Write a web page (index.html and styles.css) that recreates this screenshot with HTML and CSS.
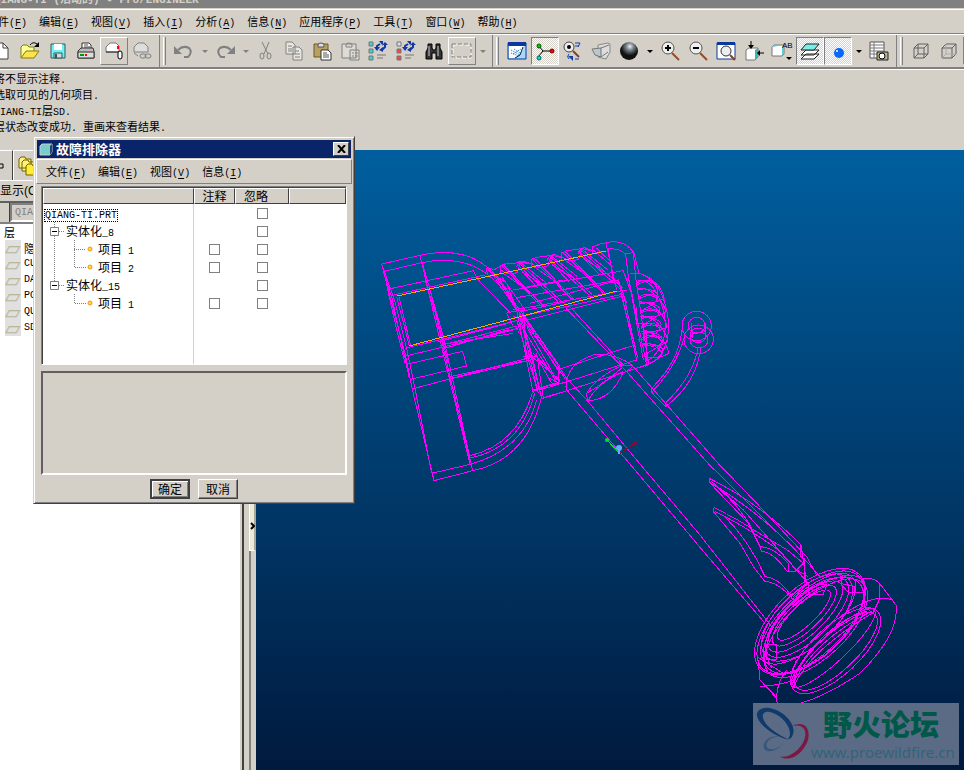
FILE: index.html
```html
<!DOCTYPE html>
<html lang="zh-CN">
<head>
<meta charset="utf-8">
<title>Pro/ENGINEER</title>
<link rel="stylesheet" href="styles.css">
</head>
<body>
<header class="titlebar">QIANG-TI (活动的) - Pro/ENGINEER</header>
<nav class="menubar main-menu">
<button>文件<span class="en">(<u>F</u>)</span></button><button>编辑<span class="en">(<u>E</u>)</span></button><button>视图<span class="en">(<u>V</u>)</span></button><button>插入<span class="en">(<u>I</u>)</span></button><button>分析<span class="en">(<u>A</u>)</span></button><button>信息<span class="en">(<u>N</u>)</span></button><button>应用程序<span class="en">(<u>P</u>)</span></button><button>工具<span class="en">(<u>T</u>)</span></button><button>窗口<span class="en">(<u>W</u>)</span></button><button>帮助<span class="en">(<u>H</u>)</span></button>
</nav>
<div class="toolbar">
<div class="group first">
<button class="tool" aria-label="新建"><svg viewBox="0 0 20 20"><path d="M3 2h8l5 5v11H3z" fill="#fff" stroke="#404040"/><path d="M11 2v5h5" fill="none" stroke="#404040"/></svg></button>
<button class="tool" aria-label="打开"><svg viewBox="0 0 20 20"><path d="M1 17V6l2-2h4l2 2h5v4" fill="#ffff9c" stroke="#808000"/><path d="M1 17l5-7h13l-5 7z" fill="#ffe34a" stroke="#808000"/><path d="M10 4q3-4 7-1" fill="none" stroke="#000"/><path d="M19 1v5h-5z"/></svg></button>
<button class="tool" aria-label="保存"><svg viewBox="0 0 20 20"><path d="M3 3h14v14H3z" fill="#6ff0f4" stroke="#305860"/><path d="M6 3h8v6H6z" fill="#fff"/><path d="M6 12h8v5H6z" fill="#d8d8d8" stroke="#305860"/><path d="M7 13h2v4H7z" fill="#305860"/></svg></button>
<button class="tool" aria-label="打印"><svg viewBox="0 0 20 20"><path d="M6 8V2h7l2 2v5z" fill="#fff" stroke="#333"/><path d="M8 4h4M8 6h6" stroke="#555"/><path d="M2 10l3-3h12l1 3v7H2z" fill="#bcbcbc" stroke="#333"/><path d="M2 11h16v6H2z" fill="#ddd" stroke="#333"/><path d="M4 14h4" stroke="#009900" stroke-width="2"/><path d="M9 14h2" stroke="red" stroke-width="2"/></svg></button>
<button class="tool raised" aria-label="发送邮件"><svg viewBox="0 0 20 20"><path d="M2 11V6l4-4h6l3 3v6z" fill="#fff" stroke="#777"/><path d="M2 11h12" stroke="#222"/><path d="M13 5h2v3h-2z" fill="red"/><rect x="14" y="10" width="4" height="8" rx="2" fill="#fff" stroke="#000" stroke-width="1"/></svg></button>
<button class="tool" aria-label="发送链接"><svg viewBox="0 0 20 20" fill="none" stroke="#808080"><path d="M2 11V6l4-4h6l4 4v5z" fill="#ddd"/><path d="M2 12l4 3"/><rect x="8" y="13" width="6" height="4" rx="2"/><rect x="13" y="13" width="6" height="4" rx="2"/></svg></button>
</div>
<div class="group">
<button class="tool" aria-label="撤消"><svg viewBox="0 0 20 20"><path d="M4 9q5-5 11-2 4 4-1 9h-4" fill="none" stroke="#808080" stroke-width="2"/><path d="M0 5v8h8z" fill="#808080"/></svg></button><button class="arrow dim" aria-label="撤消列表"></button>
<button class="tool" aria-label="重做"><svg viewBox="0 0 20 20"><path d="M16 9Q11 4 5 7q-4 4 1 9h4" fill="none" stroke="#808080" stroke-width="2"/><path d="M20 5v8h-8z" fill="#808080"/></svg></button><button class="arrow dim" aria-label="重做列表"></button>
<button class="tool" aria-label="剪切"><svg viewBox="0 0 20 20" fill="none" stroke="#808080"><path d="M6 1l6 12M13 1L8 13"/><ellipse cx="6" cy="15" rx="2" ry="3"/><ellipse cx="13" cy="15" rx="2" ry="3"/></svg></button>
<button class="tool" aria-label="复制"><svg viewBox="0 0 20 20" fill="#e8e6e0" stroke="#808080"><path d="M2 1h6l3 3v9H2zM9 6h6l3 3v10H9z"/><path d="M4 5h4M4 8h4M4 10h4M11 10h4M11 13h5M11 16h5"/></svg></button>
<button class="tool" aria-label="粘贴"><svg viewBox="0 0 20 20"><path d="M2 3h14v13H2z" fill="#b8a060" stroke="#705820"/><path d="M6 4q0-2 3-2t3 2v2H6z" fill="#ddd" stroke="#555"/><path d="M9 9h7l3 3v7H9z" fill="#fff" stroke="#333"/><path d="M11 12h4M11 14h6M11 16h6" stroke="#555"/></svg></button>
<button class="tool" aria-label="选择性粘贴"><svg viewBox="0 0 20 20" fill="#dedbd4" stroke="#808080"><path d="M2 3h14v14H2zM6 4q0-2 3-2t3 2v2H6zM10 9h9v10h-9z"/><path d="M12 12h2M15 12h3M12 15h2M15 15h3"/></svg></button>
<button class="tool" aria-label="再生"><svg viewBox="0 0 20 20"><path d="M1 1h4v4H1zM1 8h4v4H1zM1 15h4v4H1z" fill="#40d0d0" stroke="#777"/><path d="M9 8V5l3-2M17 3v3l-3 3" fill="none" stroke="#1038a8" stroke-width="2"/><path d="M11 0h4v5zM6 6h6L9 10zM14 4h6L17 1zM15 6v5l-4-2z" fill="#1038a8"/><path d="M9 14h9M9 17h6" stroke="#777"/></svg></button>
<button class="tool" aria-label="再生管理器"><svg viewBox="0 0 20 20"><path d="M1 1h4v4H1z" fill="#ddd" stroke="#777"/><path d="M1 8h4v4H1zM1 15h4v4H1z" fill="#f04848" stroke="#777"/><path d="M9 8V5l3-2M17 3v3l-3 3" fill="none" stroke="#1038a8" stroke-width="2"/><path d="M11 0h4v5zM6 6h6L9 10zM14 4h6L17 1zM15 6v5l-4-2z" fill="#1038a8"/><path d="M9 14h9M9 17h6" stroke="#777"/></svg></button>
<button class="tool" aria-label="查找"><svg viewBox="0 0 20 20"><path d="M4 3h4v4l1 2h2l1-2V3h4v4l2 4v7h-6v-6H8v6H2v-7l2-4z" fill="#333" stroke="#000"/><path d="M5 5v10M14 5v10" stroke="#ccc"/></svg></button>
<button class="tool raised" aria-label="选取框"><svg viewBox="0 0 20 20"><path d="M1 4h18v13H1z" fill="none" stroke="#fff" stroke-dasharray="4 2"/><path d="M0 3h19v13H0z" fill="none" stroke="#808080" stroke-dasharray="4 2"/></svg></button><button class="arrow dim" aria-label="选取列表"></button>
</div>
<div class="group">
<button class="tool" aria-label="重画"><svg viewBox="0 0 20 20"><path d="M1 2h18v16H1z" fill="#a4d8fc" stroke="#0838a0"/><path d="M1 1h18v4H1z" fill="#0838a0"/><path d="M2 5h15q-3 9-10 12H2z" fill="#fff"/><path d="M4 9l9 5M6 13l8-5M4 12l8 3M7 8l6 4" fill="none" stroke="#0070d0" stroke-dasharray="1 1"/><path d="M8 17l5-3 3-8" fill="none" stroke="#123"/></svg></button>
<button class="tool pressed" aria-label="旋转中心"><svg viewBox="0 0 20 20"><path d="M3 4l5 6h9M8 10l-5 6" fill="none" stroke="#000"/><circle cx="4" cy="5" r="2" fill="#0c0" stroke="#050"/><circle cx="17" cy="10" r="2" fill="#f00" stroke="#700"/><circle cx="4" cy="17" r="2" fill="#0dd" stroke="#066"/></svg></button>
<button class="tool" aria-label="定向模式"><svg viewBox="0 0 20 20"><circle cx="6" cy="6" r="5" fill="#eee" stroke="#444"/><circle cx="6" cy="6" r="2"/><path d="M10 10l6 6" stroke="#844020" stroke-width="2"/><path d="M12 2h5M12 5h4M17 2l-2 4M6 18q-3-2 0-5M12 18h4" fill="none" stroke="#1040a8"/><path d="M5 15h5v5z" fill="#1040a8"/></svg></button>
<button class="tool" aria-label="视图管理器"><svg viewBox="0 0 20 20"><path d="M7 4l10-2 2 1v8l-4 7-8-2z" fill="#ddd" stroke="#888"/><path d="M1 8l9-1v9l-6-2zM10 7l8-3M10 16l7-5" fill="#b8c8cc" stroke="#777"/></svg></button>
<button class="tool" aria-label="着色"><svg viewBox="0 0 20 20"><defs><radialGradient id="ball" cx=".55" cy=".25"><stop stop-color="#eee"/><stop offset=".4" stop-color="#7c8790"/><stop offset="1" stop-color="#111"/></radialGradient></defs><circle cx="10" cy="10" r="9" fill="url(#ball)"/></svg></button><button class="arrow" aria-label="着色列表"></button>
<button class="tool" aria-label="放大"><svg viewBox="0 0 20 20"><circle cx="8" cy="7" r="6" fill="#eee" stroke="#555"/><path d="M5 7h6M8 4v6" stroke="#000" stroke-width="2"/><path d="M12 12l7 7" stroke="#944c28" stroke-width="2"/></svg></button>
<button class="tool" aria-label="缩小"><svg viewBox="0 0 20 20"><circle cx="8" cy="7" r="6" fill="#eee" stroke="#555"/><path d="M5 7h6" stroke="#000" stroke-width="2"/><path d="M12 12l7 7" stroke="#944c28" stroke-width="2"/></svg></button>
<button class="tool" aria-label="重新调整"><svg viewBox="0 0 20 20"><path d="M1 2h18v16H1z" fill="#fff" stroke="#0838a0"/><path d="M1 1h18v3H1z" fill="#0838a0"/><circle cx="10" cy="10" r="5" fill="#eee" stroke="#333"/><path d="M14 14l5 5" stroke="#844020" stroke-width="2"/></svg></button>
<button class="tool" aria-label="重定向"><svg viewBox="0 0 20 20"><path d="M2 9l3-2h9v9l-3 3H2z" fill="#fff" stroke="#777"/><path d="M11 9l3-2v9l-3 3z" fill="#39b8b8"/><path d="M7 0v6M14 12h6" stroke="#000"/><path d="M4 4h6L7 8zM16 9v6l-3-3z"/></svg></button>
<button class="tool" aria-label="已命名视图"><svg viewBox="0 0 20 20"><path d="M0 6l2-2h10v9l-2 2H0z" fill="#fff" stroke="#777"/><path d="M0 6l2-2h10l-2 2v8l2-1V4z" fill="#5cd"/><path d="M14 16h6l-3 3z"/><text x="10" y="7">AB</text></svg></button>
<button class="tool pressed" aria-label="层"><svg viewBox="0 0 20 20"><path d="M1 18l5-5h13l-5 5zM1 14l5-5h13l-5 5z" fill="#fff" stroke="#222"/><path d="M1 9l5-6h13l-5 6z" fill="#78f0e8" stroke="#222"/></svg></button>
<button class="tool pressed" aria-label="增强的真实感"><svg viewBox="0 0 20 20"><circle cx="11" cy="12" r="5" fill="#0868f8"/><circle cx="9" cy="10" r="1" fill="#fff"/></svg></button><button class="arrow" aria-label="真实感列表"></button>
<button class="tool" aria-label="捕捉"><svg viewBox="0 0 20 20"><path d="M1 1h14v16H1z" fill="#fff" stroke="#555"/><path d="M1 4h14M1 7h14M1 10h14M1 13h14M5 1v16" stroke="#777"/><path d="M8 11h11v8H8z" fill="#b8b48c" stroke="#222"/><circle cx="13" cy="15" r="3" fill="#fff" stroke="#000"/></svg></button>
</div>
<div class="group">
<button class="tool" aria-label="线框"><svg viewBox="0 0 20 20" fill="none" stroke="#606060"><path d="M3 7h10v10H3zM7 3h10v10H7zM3 7l4-4M13 7l4-4M13 17l4-4M3 17l4-4"/></svg></button>
<button class="tool" aria-label="隐藏线"><svg viewBox="0 0 20 20" fill="none" stroke="#606060"><path d="M3 7h10v10H3zM3 7l4-4h10v10l-4 4M13 7l4-4"/><path d="M7 3v10h10M3 17l4-4" stroke="#aaa"/></svg></button>
<button class="tool pressed" aria-label="无隐藏线"></button>
</div>
</div>
<section class="messages">
<p>将不显示注释<span class="en">.</span></p><p>选取可见的几何项目<span class="en">.</span></p><p><span class="en">QIANG-TI</span>层<span class="en">SD.</span></p><p>层状态改变成功<span class="en">. </span>重画来查看结果<span class="en">.</span></p>
</section>
<main>
<aside>
<div class="tabs"><button class="tab" aria-label="模型树"><svg width="8" height="8"><path d="M0 2h3v4H0" fill="none" stroke="#000"/></svg></button><button class="tab" aria-label="层树"><svg width="20" height="20" viewBox="0 0 20 20"><path d="M1 12V3l2-2h4l1 2h5v9zM4 15V6l2-2h4l1 2h5v9z" fill="#fff37a" stroke="#706000"/><path d="M8 19v-9l2-2h4l1 2h5v9z" fill="#ffee38" stroke="#706000"/></svg></button></div>
<div class="show">显示(O)</div>
<div class="filter"><button aria-label="过滤"></button><select disabled aria-label="模型"><option>QIANG-TI.PRT</option></select></div>
<div class="layers">
<div class="layer-head">层</div>
<ul><li>隐</li><li><span class="en">CU</span></li><li><span class="en">DA</span></li><li><span class="en">PO</span></li><li><span class="en">QU</span></li><li><span class="en">SD</span></li></ul>
</div>
</aside>
<div class="splitter"><button aria-label="折叠"><svg width="5" height="8"><path d="M1 1l3 3-3 3" fill="none" stroke="#000" stroke-width="2"/></svg></button></div>
<section class="canvas">
<svg class="model" viewBox="256 150 708 620" preserveAspectRatio="xMinYMin meet">
<defs>
<g id="rib"><path d="M62 132V108Q80 98 105 100L118 95 150 102M64 120Q85 140 112 127L122 95M66 108L185 230M72 106L190 228M76 108L150 190M70 130L120 165M110 112Q112 96 130 93L158 104M112 104L235 215M118 100L245 214M122 98L200 160M118 115L175 175M125 125L190 165"/></g>
<path id="coil" d="M470 160Q500 140 530 160 550 185 552 205 520 225 480 215M474 180Q505 170 532 190 540 205 520 222L480 245M472 175Q510 172 534 205M471 165Q505 145 528 164"/>
</defs>
<g class="wire">
<g transform="translate(370 230) scale(.33333)">
<path d="M35 102L150 76Q240 55 310 85 360 110 390 150L440 240M40 125L155 98Q240 80 310 108 360 130 400 180L450 250M35 102L60 200 105 370 125 470 192 752M38 110L75 215 110 355 135 475 185 730M40 125L65 200 118 445M48 145L52 175 78 290 105 400M150 76L210 330 300 703M157 98L220 320 308 722M165 150L195 245 240 440 300 690M180 180L235 400M185 730L300 703Q460 660 500 510M192 752L308 722Q470 690 515 500M300 677Q440 645 487 490M300 684Q450 655 494 490"/>
<path d="M57 177L310 122 325 150 420 248M62 197L345 135M80 200L118 348M87 200L122 348M105 355L440 272M108 378L430 300M110 403L278 364 290 408 122 448M130 476L490 380M240 440L460 393M245 446L490 388M210 347L440 288M215 352L440 296M218 343L430 310M222 356L410 300M205 335L415 280M410 248L460 240M410 250L430 290"/>
<path d="M440 240L490 490M448 250L502 480M455 265L515 505M440 270L505 490M450 250L487 380 515 505M460 240L470 390M445 310L460 260M440 300L470 255M430 260L465 270M460 380L500 378M485 485L518 475M390 150L425 200 440 240M395 140L465 240M450 240L570 410M458 255L570 430M470 290L560 450M490 370L570 455M500 380L545 460M490 480L570 455M515 505L570 488"/>
</g>
<g transform="translate(480 230) scale(.33333)">
<use href="#rib"/><use href="#rib" x="92" y="-20"/><use href="#rib" x="184" y="-40"/>
<path d="M22 135L20 115 45 118 75 100M22 115Q40 142 62 130M28 118L110 240M32 118L118 238M38 130L80 160 110 235M338 68V48M340 60L400 112M350 55L395 98"/>
<path d="M340 50Q360 40 380 38 430 25 462 68L478 132M380 55Q420 55 437 72L460 68M378 40L410 180M384 55L400 150M437 72L445 140 500 405M460 70L468 150 505 400M445 140L470 280 490 390M100 180L430 122 450 180M110 203L415 150 440 220M100 240L440 180M120 260L430 192M120 275L430 198M150 220L400 155M120 175L250 150M120 245L260 215"/>
<path d="M415 150L470 390M422 190L465 350M430 190L473 385M230 420L465 345M190 505L500 405M180 480L470 390M160 480L235 460M450 130Q490 125 510 150 540 170 530 200M465 130Q535 130 560 240 575 310 550 360 535 395 495 405M475 150Q525 150 550 240 565 310 540 350 525 385 495 395"/>
<use href="#coil"/><use href="#coil" x="5" y="42"/><use href="#coil" x="9" y="86"/><use href="#coil" x="12" y="130"/><use href="#coil" x="14" y="165"/>
<path d="M470 230V280H490V330H475M490 310H500V390M120 240L260 445 322 512M130 270L255 445M125 290L235 465M265 225L430 405M460 410L732 720M258 235L440 425 702 720M260 455V480L465 720M322 512L495 720M258 470Q260 400 340 375 400 365 460 408M320 490Q350 440 430 405L460 408 440 425M325 512Q395 510 430 425M325 512Q350 460 430 425M320 490L322 512M320 490Q380 455 430 410M235 410V460L210 445M155 380L240 450M170 370L190 505"/>
<ellipse cx="650" cy="288" rx="44" ry="44"/><ellipse cx="650" cy="286" rx="25" ry="24"/><ellipse cx="656" cy="328" rx="44" ry="43"/><ellipse cx="657" cy="330" rx="27" ry="24"/><ellipse cx="654" cy="316" rx="24" ry="22"/><path d="M605 300Q600 390 515 475V487L557 530Q650 460 663 350M613 320Q590 410 515 487M557 518Q640 440 655 350M557 518V530M635 280L637 325M678 280V320"/>
</g>
<g transform="translate(700 460) scale(.33333)">
<path d="M-165 30L0 225 215 500M-195 30L0 262 195 490M15 0L325 310 360 350M45 0L175 135 320 290 350 345M28 55V67L145 190 180 260 185 275Q220 275 262 335H285L310 310M28 55Q180 130 303 255L320 370M32 62L130 150 290 330 325 350M28 67Q180 155 310 295M42 143V157L120 250 160 320 195 365Q235 365 280 420V440L325 403M42 143Q110 175 170 215L262 270 310 310M45 155Q140 200 235 270L325 370M50 80Q110 130 150 195L180 260Q220 260 265 310V335M70 165Q150 245 195 350 240 355 275 410M303 255L300 290 312 295 315 370M325 370V403H370L380 375 345 373M280 410L325 370"/>
<g transform="rotate(-43 330 485)"><ellipse cx="330" cy="485" rx="205" ry="105"/><ellipse cx="330" cy="488" rx="200" ry="98"/><ellipse cx="330" cy="500" rx="187" ry="92"/><ellipse cx="332" cy="470" rx="170" ry="82"/><ellipse cx="332" cy="475" rx="182" ry="75"/><ellipse cx="332" cy="470" rx="160" ry="65"/><ellipse cx="330" cy="464" rx="145" ry="54"/><ellipse cx="330" cy="460" rx="125" ry="44"/><ellipse cx="330" cy="458" rx="105" ry="32"/><ellipse cx="330" cy="512" rx="195" ry="88"/></g>
<g transform="rotate(-43 405 570)"><ellipse cx="405" cy="573" rx="172" ry="72"/><ellipse cx="405" cy="575" rx="160" ry="58"/><ellipse cx="405" cy="562" rx="168" ry="40"/><path d="M240 565Q350 520 560 565M245 555Q370 490 555 550M235 560Q380 505 565 560"/></g>
<path d="M420 350Q480 335 495 375V440L518 460M425 350V375L445 397H490M490 357Q520 350 540 372L588 435Q600 520 480 640 330 740 240 738 230 735 230 715L180 660 173 590M540 372V415Q500 415 420 470M540 415L580 418M518 460L540 415M180 680Q240 675 285 660M230 720Q228 670 260 630M180 660L225 705M285 685V655L275 635 290 600M200 555H230V600H200zM170 590L250 640H275M190 570L215 625M420 370L465 380V400"/>
</g>
</g>
<path class="edge" d="M397 296L606 251M409 346L617 291"/>
<path d="M607 440l12 13" stroke="#00e020"/><path d="M619 454l16-11" stroke="#a00030"/><path d="M619 449v5" stroke="#60b0ff" stroke-width="2"/><circle cx="607" cy="440" r="2" fill="#00e020"/><circle cx="635" cy="443" r="2" fill="#a00030"/><circle cx="619" cy="448" r="3" fill="#60b0ff"/>
</svg>
<div class="watermark">
<svg viewBox="0 0 60 60"><path d="M37 37C20 33 4 20 4 10 8-4 40 8 42 27 42 33 39 37 36 36 43 30 33 13 20 9 6 4 4 20 33 35" fill="#103a6c"/><path d="M40 23C51 17 60 23 57 37 52 52 38 61 27 54 36 57 49 48 53 37 57 27 51 20 40 23" fill="#7c1844"/><path d="M30 34C17 31 8 40 12 47 17 52 29 46 32 39 26 49 13 49 14 42 15 36 22 33 30 34" fill="#35577a"/></svg>
<div><strong>野火论坛</strong><span>www.proewildfire.cn</span></div>
</div>
</section>
</main>
<div class="dialog" role="dialog" aria-label="故障排除器">
<div class="dialog-title"><svg width="14" height="14" viewBox="0 0 14 14"><path d="M1 4l2-2h10v8l-2 3H1z" fill="#7cc" stroke="#ccc"/><path d="M11 4l2-2v8l-2 3z" fill="#246"/></svg><span>故障排除器</span><button aria-label="关闭"><svg width="9" height="8"><path d="M1 0l7 8M8 0L1 8" stroke="#000" stroke-width="2"/></svg></button></div>
<nav class="menubar"><button>文件<span class="en">(<u>F</u>)</span></button><button>编辑<span class="en">(<u>E</u>)</span></button><button>视图<span class="en">(<u>V</u>)</span></button><button>信息<span class="en">(<u>I</u>)</span></button></nav>
<div class="list">
<table>
<colgroup><col><col class="c-note"><col class="c-skip"><col class="c-end"></colgroup>
<thead><tr><th></th><th>注释</th><th>忽略</th><th></th></tr></thead>
<tbody>
<tr><td><div class="node"><span class="en focus">QIANG-TI.PRT</span></div></td><td></td><td><input type="checkbox" aria-label="忽略 QIANG-TI.PRT"></td><td></td></tr>
<tr><td><div class="node"><svg width="21" height="18"><path d="M9.5 0v18M14 9.5h6" class="dots"/><path d="M5.500 5.500h8v8h-8z" class="box"/><path d="M7 9.500h5" stroke="#000"/></svg>实体化<span class="en">_8</span></div></td><td></td><td><input type="checkbox" aria-label="忽略 实体化_8"></td><td></td></tr>
<tr><td><div class="node"><svg width="53" height="18"><path d="M9.5 0v18M29.5 0v18M29 9.500h12" class="dots"/><circle cx="45" cy="9" r="2" class="dot"/></svg>项目<span class="en"> 1</span></div></td><td><input type="checkbox" aria-label="注释 项目 1"></td><td><input type="checkbox" aria-label="忽略 项目 1"></td><td></td></tr>
<tr><td><div class="node"><svg width="53" height="18"><path d="M9.5 0v18M29.5 0v9.500h12" class="dots"/><circle cx="45" cy="9" r="2" class="dot"/></svg>项目<span class="en"> 2</span></div></td><td><input type="checkbox" aria-label="注释 项目 2"></td><td><input type="checkbox" aria-label="忽略 项目 2"></td><td></td></tr>
<tr><td><div class="node"><svg width="21" height="18"><path d="M9.5 0v5M14 9.500h6" class="dots"/><path d="M5.500 5.500h8v8h-8z" class="box"/><path d="M7 9.500h5" stroke="#000"/></svg>实体化<span class="en">_15</span></div></td><td></td><td><input type="checkbox" aria-label="忽略 实体化_15"></td><td></td></tr>
<tr><td><div class="node"><svg width="53" height="18"><path d="M29.5 0v9.500h12" class="dots"/><circle cx="45" cy="9" r="2" class="dot"/></svg>项目<span class="en"> 1</span></div></td><td><input type="checkbox" aria-label="注释 实体化_15 项目 1"></td><td><input type="checkbox" aria-label="忽略 实体化_15 项目 1"></td><td></td></tr>
</tbody>
<tfoot><tr><td></td><td></td><td></td><td></td></tr></tfoot>
</table>
</div>
<div class="detail"></div>
<div class="actions"><button class="default">确定</button><button>取消</button></div>
</div>
</body>
</html>
```
FILE: styles.css
```css
*, *::before { box-sizing: border-box; }
body { margin: 0; height: 100vh; display: flex; flex-direction: column; overflow: hidden; background: #d4d0c8; color: #000; font: 11px/16px "Noto Sans CJK SC", sans-serif; }
button { margin: 0; padding: 0; border: 0; background: none; color: inherit; font: inherit; }
svg { display: block; flex: none; }
u { text-underline-offset: 2px; }
.en { font-family: "Liberation Mono", monospace; font-size: 10px; line-height: 12px; white-space: pre; }

.titlebar { height: 9px; flex: none; display: flex; align-items: flex-end; background: #808080; border-bottom: 1px solid #d4d0c8; color: #d4d0c8; font: bold 11px/12px "Liberation Mono", "Noto Sans CJK SC", monospace; overflow: hidden; white-space: pre; padding-bottom: 2px; margin-left: -6px; }
.menubar { display: flex; gap: 12px; align-items: center; white-space: nowrap; }
.main-menu { height: 25px; flex: none; border-top: 1px solid #fff; border-bottom: 1px solid #808080; margin-left: -13px; }

.toolbar { height: 35px; flex: none; display: flex; border-top: 1px solid #fff; border-bottom: 2px solid #808080; overflow: hidden; }
.group { display: flex; flex: none; align-items: center; padding-right: 3px; border-right: 1px solid #808080; }
.group::before { content: ""; width: 3px; height: 28px; margin: 0 4px 0 3px; border-left: 1px solid #fff; border-right: 1px solid #808080; }
.group.first { margin-left: -12px; }
.group.first::before { display: none; }
.tool { width: 28px; height: 28px; flex: none; display: flex; align-items: center; justify-content: center; border: 1px solid transparent; }
.tool svg { width: 20px; height: 20px; overflow: visible; }
.tool text { font: 8px "Liberation Sans", sans-serif; }
.raised { border-color: #fff #808080 #808080 #fff; }
.pressed { border-color: #808080 #fff #fff #808080; background: repeating-conic-gradient(#fff 0 25%, #d4d0c8 0 50%) 0 0 / 2px 2px; }
.arrow { width: 13px; height: 28px; display: flex; align-items: center; justify-content: center; }
.arrow::before { content: ""; border: 3px solid transparent; border-top-color: #000; border-bottom: 0; }
.dim::before { border-top-color: #808080; }

.messages { height: 81px; flex: none; border-top: 1px solid #fff; margin-left: -6px; white-space: nowrap; }
.messages p { margin: 0; height: 16px; }

main { flex: 1; min-height: 0; display: flex; }
aside { width: 244px; flex: none; display: flex; flex-direction: column; border-right: 2px solid #404040; }
.tabs { height: 31px; display: flex; border-bottom: 1px solid #fff; }
.tab { width: 13px; display: flex; align-items: center; border-top: 1px solid #fff; border-right: 1px solid #404040; }
.tab + .tab { width: 30px; padding-left: 4px; border-left: 1px solid #fff; }
.show { height: 20px; font: 12px/20px "Liberation Sans", "Noto Sans CJK SC", sans-serif; }
.filter { height: 23px; display: flex; border-top: 2px solid #606060; border-bottom: 2px solid #808080; }
.filter button { width: 10px; border-right: 1px solid #404040; }
.filter select { flex: 1; appearance: none; border: 2px solid; border-color: #808080 #fff #fff #808080; padding: 0 3px; background: #d4d0c8; color: #808080; opacity: 1; font: 10px/14px "Liberation Mono", monospace; }
.layers { flex: 1; background: #fff; border-right: 2px solid #d4d0c8; }
.layer-head { padding-left: 4px; }
.layers ul { list-style: none; margin: 0; padding: 0; }
.layers li { display: flex; gap: 3px; height: 16px; }
.layers li .en { line-height: 16px; }
.layers li::before { content: "▱"; width: 16px; margin-left: 5px; background: #e0e0e0; color: #b8b498; font: 20px/16px "DejaVu Sans", sans-serif; overflow: hidden; }

.splitter { width: 12px; flex: none; display: flex; justify-content: flex-end; background: linear-gradient(#808080, #808080) 5px 0 / 2px 100% no-repeat; }
.splitter button { width: 7px; height: 401px; padding-top: 350px; display: flex; align-items: center; background: #ece9d8; border: 1px solid #fff; border-right: 2px solid #aca899; }

.canvas { flex: 1; min-width: 0; position: relative; overflow: hidden; background: linear-gradient(#005f9f, #001a3e); }
.model { width: 100%; height: 100%; }
.model path, .model ellipse { vector-effect: non-scaling-stroke; shape-rendering: crispEdges; }
.wire { fill: none; stroke: #f0f; }
.edge { fill: none; stroke: #ffa500; }
.watermark { position: absolute; right: 5px; bottom: 5px; width: 206px; height: 62px; display: flex; background: #5c6b85; }
.watermark svg { width: 58px; height: 60px; }
.watermark div { display: flex; flex-direction: column; }
.watermark strong { padding-left: 12px; color: #005848; font: 900 29px/40px "Noto Sans CJK SC", sans-serif; }
.watermark span { color: #316478; font: 15px/18px "Noto Sans", sans-serif; }

.dialog { position: absolute; left: 33px; top: 136px; width: 322px; padding: 2px; background: #d4d0c8; border: 1px solid; border-color: #d4d0c8 #404040 #404040 #d4d0c8; box-shadow: inset 1px 1px #fff, inset -1px -1px #808080; }
.dialog-title { height: 18px; margin: 1px; padding: 0 2px; display: flex; gap: 3px; align-items: center; background: #0a246a; color: #fff; font-size: 13px; font-weight: bold; }
.dialog-title button { margin-left: auto; width: 16px; height: 14px; display: flex; align-items: center; justify-content: center; background: #d4d0c8; border: 1px solid; border-color: #fff #404040 #404040 #fff; }
.dialog .menubar { height: 25px; padding-left: 9px; border: 1px solid; border-color: #fff #808080 #808080 #fff; }
.list { margin: 2px 5px 0; border: 1px solid; border-color: #808080 #fff #fff #808080; }
table { width: 100%; border-collapse: separate; border-spacing: 0; table-layout: fixed; background: #fff; font-size: 12px; border-left: 1px solid #404040; border-top: 1px solid #404040; }
.c-note { width: 41px; }
.c-skip { width: 54px; }
.c-end { width: 57px; }
th { height: 16px; padding: 0; line-height: 14px; font-weight: normal; background: #d4d0c8; border: 1px solid; border-color: #fff #404040 #404040 #fff; }
th:nth-child(3) { text-align: left; padding-left: 8px; }
td { height: 18px; padding: 0; text-align: center; }
td:first-child { border-right: 1px solid #d4d0c8; }
tfoot td { height: 52px; }
.node { height: 18px; padding-left: 2px; line-height: 18px; text-align: left; white-space: nowrap; }
.node svg { display: inline-block; vertical-align: top; }
.focus { outline: 1px dotted #000; }
.dots { fill: none; stroke: #808080; stroke-dasharray: 1 1; }
.box { fill: #fff; stroke: #808080; }
.dot { fill: #ffe020; stroke: #f09030; }
input { appearance: none; display: block; width: 11px; height: 11px; margin: 0 auto; border: 1px solid #808080; background: #fff; }
.detail { height: 104px; margin: 6px 5px 0; border: 2px solid; border-color: #606060 #fff #fff #606060; }
.actions { display: flex; justify-content: center; gap: 8px; padding: 4px 0 2px; }
.actions button { width: 40px; height: 20px; font-size: 12px; line-height: 16px; border: 1px solid; border-color: #fff #404040 #404040 #fff; box-shadow: inset -1px -1px #808080; }
.actions .default { border: 2px solid #404040; box-shadow: inset 1px 1px #fff, inset -1px -1px #808080; }
```
